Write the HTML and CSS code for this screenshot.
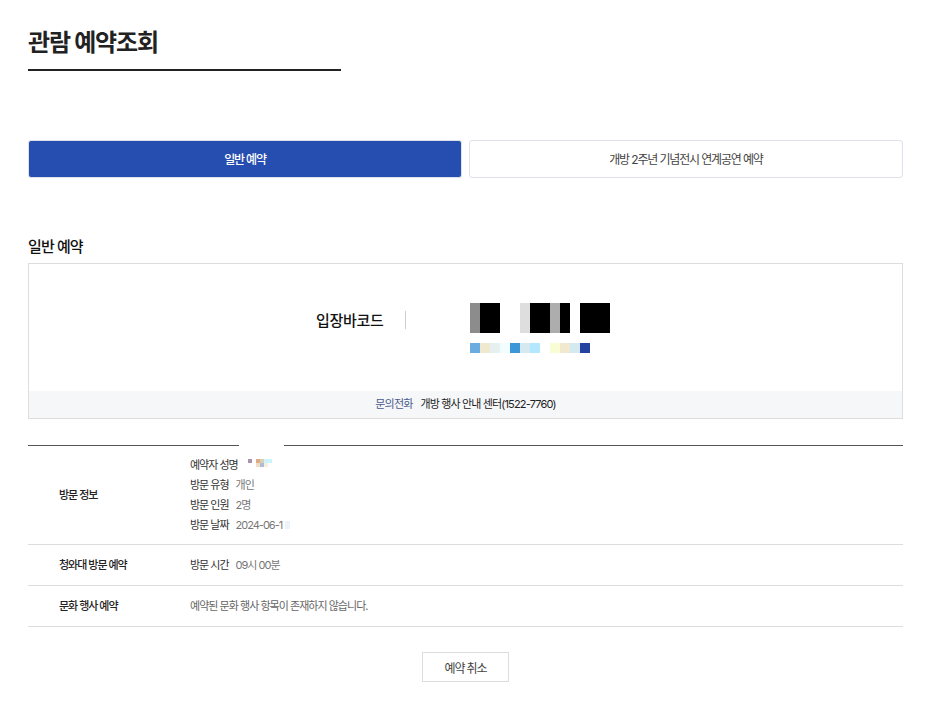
FILE: index.html
```html
<!DOCTYPE html>
<html lang="ko">
<head>
  <meta charset="UTF-8" />
  <meta name="viewport" content="width=device-width, initial-scale=1" />
  <title>관람 예약조회</title>
  <link rel="stylesheet" href="styles.css">
</head>
<body>
  <main class="container">
    <header class="page-head">
      <h1>관람 예약조회</h1>
    </header>

    <nav class="tabs">
      <a class="tab active">일반 예약</a>
      <a class="tab">개방 2주년 기념전시 연계공연 예약</a>
    </nav>

    <h2 class="section-title">일반 예약</h2>
    <section class="ticket">
      <div class="ticket-body">
        <strong class="ticket-label">입장바코드</strong>
        <div class="barcode">
          <div class="bars">
            <i class="c-gray"></i><i class="c-black"></i><i class="c-black"></i><i></i><i></i><i class="c-light"></i><i class="c-black"></i><i class="c-black"></i><i class="c-mid"></i><i class="c-black"></i><i></i><i class="c-black"></i><i class="c-black"></i><i class="c-black"></i>
          </div>
          <div class="digits">
            <i class="c-sky"></i><i class="c-sand"></i><i class="c-mist"></i><i class="c-ice"></i><i class="c-blue"></i><i class="c-pale"></i><i class="c-cyan"></i><i></i><i class="c-lemon"></i><i class="c-sand"></i><i class="c-pale"></i><i class="c-navy"></i>
          </div>
        </div>
      </div>
      <p class="ticket-foot"><span class="foot-label">문의전화</span>개방 행사 안내 센터(1522-7760)</p>
    </section>

    <div class="info-top">
      <span class="line"></span>
      <span class="line line-right"></span>
    </div>
    <section class="info">
      <div class="info-row">
        <div class="info-head">방문 정보</div>
        <ul class="info-list">
          <li>
            <b>예약자 성명</b>
            <span class="name-mask">
              <i class="m-purple"></i><i></i><i class="m-tan"></i><i class="m-sand"></i><i class="m-ice"></i><i class="m-ice"></i>
              <i></i><i></i><i class="m-peach"></i><i class="m-blue"></i><i class="m-cream"></i><i></i>
            </span>
          </li>
          <li><b>방문 유형</b><span>개인</span></li>
          <li><b>방문 인원</b><span>2명</span></li>
          <li><b>방문 날짜</b><span>2024-06-1</span><span class="date-mask"></span></li>
        </ul>
      </div>
      <div class="info-row">
        <div class="info-head">청와대 방문 예약</div>
        <ul class="info-list single">
          <li><b>방문 시간</b><span>09시 00분</span></li>
        </ul>
      </div>
      <div class="info-row">
        <div class="info-head">문화 행사 예약</div>
        <p class="info-empty">예약된 문화 행사 항목이 존재하지 않습니다.</p>
      </div>
    </section>

    <div class="actions">
      <button class="cancel-btn">예약 취소</button>
    </div>
  </main>
</body>
</html>
```

FILE: styles.css
```css
:root {
  --primary-color: #264eb1;
  --text-color: #222;
  --sub-color: #666;
  --line-color: #ddd;
  --font-family: Inter, "Noto Sans CJK KR", "Noto Sans", sans-serif;
}
* {
  box-sizing: border-box;
}
body {
  margin: 0;
  background: #fff;
  color: var(--text-color);
  font-family: var(--font-family);
  font-size: 11px;
  letter-spacing: -1px;
}
.container {
  padding: 0 24px 22px 28px;
}
.page-head {
  width: 313px;
  height: 71px;
  padding-top: 25px;
  border-bottom: 2px solid #222;
}
.page-head h1 {
  margin: 0;
  font-size: 24px;
  line-height: 36px;
  font-weight: 700;
  letter-spacing: -1.2px;
}
.tabs {
  display: flex;
  gap: 7px;
  margin-top: 69px;
}
.tab {
  flex: 1;
  height: 38px;
  display: flex;
  align-items: center;
  justify-content: center;
  padding-bottom: 1px;
  border: 1px solid #e0e0ea;
  border-radius: 3px;
  font-size: 12px;
  letter-spacing: -1.15px;
  color: #444;
}
.tab.active {
  background: var(--primary-color);
  color: #fff;
  font-weight: 500;
}
.section-title {
  margin: 57px 0 0;
  font-size: 15px;
  line-height: 24px;
  font-weight: 500;
  letter-spacing: -0.9px;
  color: #111;
}
.ticket {
  margin-top: 4px;
  border: 1px solid var(--line-color);
}
.ticket-body {
  height: 127px;
  display: flex;
  padding: 39px 0 0 287px;
}
.ticket-label {
  width: 90px;
  height: 18px;
  margin-top: 8px;
  padding-top: 1px;
  border-right: 1px solid #ccc;
  font-size: 15px;
  line-height: 18px;
  font-weight: 500;
  color: #111;
  letter-spacing: -0.3px;
}
.barcode {
  margin-left: 64px;
}
.bars,
.digits {
  display: flex;
}
.bars i {
  width: 10px;
  height: 30px;
}
.digits {
  margin-top: 10px;
}
.digits i {
  width: 10px;
  height: 10px;
}
.c-gray { background: #8c8c8c; }
.c-black { background: #000; }
.c-light { background: #dedede; }
.c-mid { background: #adadad; }
.c-sky { background: #6aacdf; }
.c-sand { background: #f0e9cf; }
.c-mist { background: #e6f0f0; }
.c-ice { background: #f2fdff; }
.c-blue { background: #3d96d8; }
.c-pale { background: #d5e9f0; }
.c-cyan { background: #b2e7ff; }
.c-lemon { background: #f9fdd5; }
.c-navy { background: #2442a0; }
.ticket-foot {
  margin: 0;
  height: 27px;
  background: #f6f7f9;
  text-align: center;
  line-height: 26px;
  font-size: 11px;
  letter-spacing: -0.85px;
  color: #222;
}
.foot-label {
  margin-right: 8px;
  color: #4a5a8a;
}
.info-top {
  display: flex;
  justify-content: space-between;
  margin-top: 26px;
}
.line {
  width: 211px;
  height: 1px;
  background: #555;
}
.line-right {
  width: 619px;
}
.info-row {
  display: flex;
  align-items: center;
  border-bottom: 1px solid var(--line-color);
}
.info-head {
  width: 162px;
  padding: 0 0 2px 31px;
  color: #222;
  font-weight: 500;
}
.info-list {
  margin: 0;
  padding: 11px 0 10px;
  list-style: none;
  display: flex;
  flex-direction: column;
  gap: 3px;
}
.info-list.single {
  padding: 12px 0 11px;
}
.info-list li {
  height: 17px;
  line-height: 17px;
  display: flex;
  color: #777;
}
.info-list b {
  margin-right: 7px;
  font-weight: 400;
  color: #333;
}
.name-mask {
  display: grid;
  grid-template-columns: repeat(6, 4px);
  grid-auto-rows: 4px;
  margin: 2px 0 0 3px;
}
.m-purple { background: #a992ad; }
.m-tan { background: #dcae84; }
.m-sand { background: #d8cfb8; }
.m-ice { background: #cdf3ff; }
.m-peach { background: #f2dcc8; }
.m-blue { background: #aebcd8; }
.m-cream { background: #f7ede0; }
.date-mask {
  width: 5px;
  height: 8px;
  margin: 4px 0 0 3px;
  background: #eef3fb;
}
.info-empty {
  margin: 0;
  padding: 12px 0 11px;
  line-height: 17px;
  letter-spacing: -0.97px;
  color: #666;
}
.actions {
  display: flex;
  justify-content: center;
  margin-top: 25px;
}
.cancel-btn {
  width: 87px;
  height: 30px;
  background: #fff;
  border: 1px solid var(--line-color);
  font-family: var(--font-family);
  font-size: 12px;
  letter-spacing: -1.15px;
  color: #444;
}
```
